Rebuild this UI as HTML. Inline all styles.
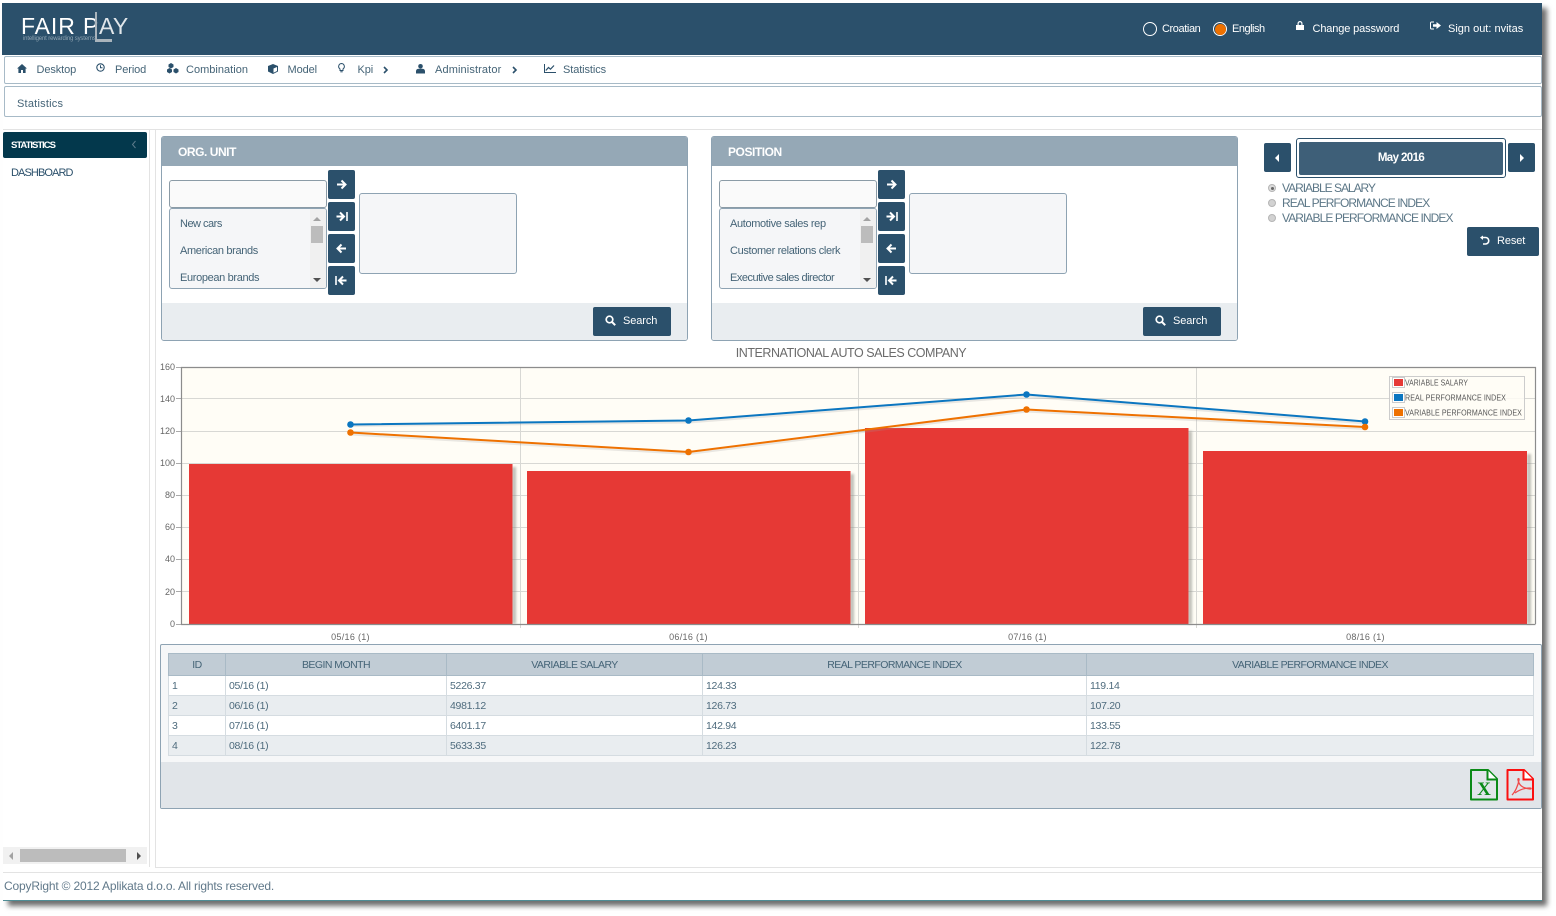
<!DOCTYPE html>
<html><head><meta charset="utf-8"><title>Fair Play</title>
<style>
*{box-sizing:border-box}
html,body{margin:0;padding:0;background:#fff;width:1556px;height:916px;overflow:hidden}
body{font-family:"Liberation Sans",sans-serif;color:#456477;position:relative}
.a{position:absolute;white-space:nowrap}
.t{position:absolute;white-space:nowrap;font-size:11px;letter-spacing:-.1px;line-height:14px;margin-top:1px}
.btn{position:absolute;background:#2b506b;border-radius:2px;color:#fff}
.panel{position:absolute;top:136px;width:527px;height:205px;border:1px solid #8ea3b3;border-radius:3px;background:#fff;overflow:hidden}
.ph{position:absolute;left:0;top:0;right:0;height:29px;background:#95a8b6;color:#fff;font-weight:bold;font-size:12px;letter-spacing:-.45px;line-height:30px;padding-left:16px}
.pf{position:absolute;left:0;right:0;bottom:0;height:37px;background:#e9edf0}
.inp{position:absolute;left:7px;top:43px;width:158px;height:28px;background:#fafafa;border:1px solid #8b9ba6;border-radius:3px}
.lst{position:absolute;left:7px;top:71px;width:158px;height:81px;background:#f5f6f8;border:1px solid #8ea3b3;border-radius:3px;overflow:hidden}
.lst span{position:absolute;left:10px;font-size:11px;letter-spacing:-.35px;color:#456477;white-space:nowrap;line-height:14px}
.sb{position:absolute;right:0;top:0;bottom:0;width:16px;background:#f0f0f0}
.sel{position:absolute;left:197px;top:56px;width:158px;height:81px;background:#f5f6f8;border:1px solid #8ea3b3;border-radius:3px}
table{position:absolute;left:168px;top:653px;width:1365px;height:102px;border-collapse:collapse;table-layout:fixed;font-size:10.5px;letter-spacing:-.3px;color:#4e6b7d}
th{background:#c1ccd5;font-weight:normal;height:22px;padding:0;border:1px solid #a9bac6;color:#456477;font-size:10.5px;letter-spacing:-.55px}
td{height:20px;padding:0 0 0 3px;border:1px solid #d5dce1;white-space:nowrap}
.r{position:absolute;left:1282px;font-size:12px;line-height:15px;letter-spacing:-.92px;color:#5c7787;white-space:nowrap}
svg text{font-family:"Liberation Sans",sans-serif}
</style></head><body>

<!-- window shadow -->
<div class="a" style="left:3px;top:3px;width:1539px;height:898px;background:#fff;box-shadow:5px 5px 5px #6f6f6f"></div>
<div class="a" style="left:3px;top:900px;width:1539px;height:1px;background:#4f8d95"></div>

<!-- header -->
<div class="a" style="left:2px;top:3px;width:1540px;height:52px;background:#2b506b"></div>
<div class="a" style="left:21px;top:13px;color:#fff;font-size:23px;line-height:26px;letter-spacing:.9px">FAIR P</div>
<div class="a" style="left:99px;top:13px;color:#e0e6ea;font-size:23px;line-height:26px;letter-spacing:.2px">AY</div>
<div class="a" style="left:95px;top:12px;width:2px;height:29px;background:#a9b4bc"></div>
<div class="a" style="left:95px;top:39px;width:17px;height:2.5px;background:#a9b4bc"></div>
<div class="a" style="left:23px;top:35px;color:#8fa3b1;font-size:6px;line-height:8px;letter-spacing:-.15px">intelligent rewarding systems</div>

<div class="a" style="left:1143px;top:22px;width:14px;height:14px;border:1px solid #fff;border-radius:50%"></div>
<div class="t" style="left:1162px;top:21px;color:#fff;letter-spacing:-.4px">Croatian</div>
<div class="a" style="left:1213px;top:22px;width:14px;height:14px;border:1px solid #fff;border-radius:50%;background:#2b506b"></div>
<div class="a" style="left:1214.5px;top:23.5px;width:11px;height:11px;border-radius:50%;background:#ee7100"></div>
<div class="t" style="left:1232px;top:21px;color:#fff;letter-spacing:-.5px">English</div>
<svg class="a" style="left:1296px;top:21px" width="8" height="10" viewBox="0 0 8 10"><path d="M0 4h8v5H0zM1.5 4V2.5a2.5 2.5 0 0 1 5 0V4H5.3V2.6a1.3 1.3 0 0 0-2.6 0V4z" fill="#fff"/></svg>
<div class="t" style="left:1312.5px;top:21px;color:#fff;letter-spacing:-.13px">Change password</div>
<svg class="a" style="left:1430px;top:21px" width="11" height="10" viewBox="0 0 11 10"><path d="M4 1H1.5A1 1 0 0 0 .5 2v5a1 1 0 0 0 1 1H4" fill="none" stroke="#fff"/><path d="M3 3.2h3.5V1L11 4.5 6.5 8V5.8H3z" fill="#fff"/></svg>
<div class="t" style="left:1448px;top:21px;color:#fff;letter-spacing:0">Sign out: nvitas</div>

<!-- menu bar -->
<div class="a" style="left:4px;top:56px;width:1538px;height:28px;border:1px solid #a7bac7;border-radius:2px;background:#fff"></div>
<svg class="a" style="left:17px;top:64px" width="10" height="9" viewBox="0 0 10 9"><path d="M5 0 0 4.5h1.4V9h2.6V6h2v3h2.600V4.500H10z" fill="#2b506b"/></svg>
<div class="t" style="left:36.500px;top:62px">Desktop</div>
<svg class="a" style="left:96px;top:63px" width="9" height="9" viewBox="0 0 9 9"><circle cx="4.500" cy="4.500" r="3.700" fill="none" stroke="#2b506b" stroke-width="1.100"/><path d="M4.500 2.200v2.500H6.500" fill="none" stroke="#2b506b"/></svg>
<div class="t" style="left:115px;top:62px">Period</div>
<svg class="a" style="left:167px;top:63px" width="12" height="11" viewBox="0 0 12 11"><path d="M4 0 6.500 1.500V4L4 5.500 1.500 4V1.500zM2.500 5 5 6.500V9L2.500 10.500 0 9V6.500zM9 5l2.500 1.500V9L9 10.500 6.500 9V6.500z" fill="#2b506b"/></svg>
<div class="t" style="left:186px;top:62px;letter-spacing:.02px">Combination</div>
<svg class="a" style="left:268px;top:64px" width="10" height="10" viewBox="0 0 10 10"><path d="M5 0 10 2v5.500L5 10 0 7.500V2z" fill="#2b506b"/><path d="M5.500 4.500 9 3v4L5.500 8.800z" fill="#fff"/></svg>
<div class="t" style="left:287.500px;top:62px">Model</div>
<svg class="a" style="left:338px;top:63px" width="7" height="10" viewBox="0 0 7 10"><path d="M3.500.5a3 3 0 0 0-1.500 5.500V7.500h3V6A3 3 0 0 0 3.500.5z" fill="none" stroke="#2b506b"/><path d="M2.300 8.800h2.400" stroke="#2b506b"/></svg>
<div class="t" style="left:357.500px;top:62px">Kpi</div>
<svg class="a" style="left:383px;top:66px" width="6" height="8" viewBox="0 0 6 8"><path d="M1 1l3 3-3 3" fill="none" stroke="#2b506b" stroke-width="1.600"/></svg>
<svg class="a" style="left:416px;top:64px" width="9" height="10" viewBox="0 0 9 10"><circle cx="4.500" cy="2.300" r="2.300" fill="#2b506b"/><path d="M0 9.500V7a3 2.500 0 0 1 3-2.200h3A3 2.500 0 0 1 9 7v2.500z" fill="#2b506b"/></svg>
<div class="t" style="left:435px;top:62px;letter-spacing:.12px">Administrator</div>
<svg class="a" style="left:512px;top:66px" width="6" height="8" viewBox="0 0 6 8"><path d="M1 1l3 3-3 3" fill="none" stroke="#2b506b" stroke-width="1.600"/></svg>
<svg class="a" style="left:544px;top:64px" width="12" height="9" viewBox="0 0 12 9"><path d="M.5 0v8.500H12" fill="none" stroke="#2b506b"/><path d="M1.800 6.500 4.500 3.500 6.500 5.200 10 1.500" fill="none" stroke="#2b506b" stroke-width="1.200"/></svg>
<div class="t" style="left:563px;top:62px">Statistics</div>

<!-- breadcrumb -->
<div class="a" style="left:4px;top:86px;width:1538px;height:31px;border:1px solid #a7bac7;border-radius:2px;background:#fff"></div>
<div class="t" style="left:17px;top:96px;letter-spacing:.22px">Statistics</div>

<!-- layout separators -->
<div class="a" style="left:3px;top:129px;width:1539px;height:1px;background:#e3e3e3"></div>
<div class="a" style="left:149px;top:130px;width:1px;height:737px;background:#e3e3e3"></div>
<div class="a" style="left:155px;top:130px;width:1px;height:737px;background:#e3e3e3"></div>
<div class="a" style="left:155px;top:867px;width:1387px;height:1px;background:#e3e3e3"></div>
<div class="a" style="left:3px;top:872px;width:1539px;height:1px;background:#e3e3e3"></div>

<!-- sidebar -->
<div class="a" style="left:3px;top:132px;width:144px;height:26px;background:#03384c;border-radius:2px"></div>
<div class="a" style="left:11px;top:139px;color:#fff;font-size:9.500px;font-weight:bold;line-height:14px;letter-spacing:-1px">STATISTICS</div>
<svg class="a" style="left:131px;top:140px" width="6" height="9" viewBox="0 0 6 9"><path d="M4.500 1 1.500 4.500l3 3.500" fill="none" stroke="#5d7b8b"/></svg>
<div class="a" style="left:11px;top:166px;color:#2b506b;font-size:11px;line-height:14px;letter-spacing:-.9px">DASHBOARD</div>

<div class="a" style="left:3px;top:847px;width:144px;height:17px;background:#f1f1f1"></div>
<div class="a" style="left:20px;top:849px;width:106px;height:13px;background:#bcbcbc"></div>
<div class="a" style="left:9px;top:852px;width:0;height:0;border-top:4px solid transparent;border-bottom:4px solid transparent;border-right:4px solid #a3a3a3"></div>
<div class="a" style="left:137px;top:852px;width:0;height:0;border-top:4px solid transparent;border-bottom:4px solid transparent;border-left:4px solid #505050"></div>

<!-- ORG UNIT panel -->
<div class="panel" style="left:161px">
 <div class="ph">ORG. UNIT</div>
 <div class="inp"></div>
 <div class="lst"><span style="top:8px;letter-spacing:-.5px">New cars</span><span style="top:35px">American brands</span><span style="top:62px">European brands</span>
  <div class="sb"><div style="position:absolute;left:1px;top:17px;width:12px;height:17px;background:#bcbcbc"></div><div style="position:absolute;left:3px;top:8px;border-left:4px solid transparent;border-right:4px solid transparent;border-bottom:4px solid #a3a3a3"></div><div style="position:absolute;left:3px;top:69px;border-left:4px solid transparent;border-right:4px solid transparent;border-top:4px solid #505050"></div></div>
 </div>
 <div class="sel"></div>
 <div class="pf"></div>
</div>
<!-- POSITION panel -->
<div class="panel" style="left:711px">
 <div class="ph">POSITION</div>
 <div class="inp"></div>
 <div class="lst"><span style="top:8px">Automotive sales rep</span><span style="top:35px">Customer relations clerk</span><span style="top:62px;letter-spacing:-.5px">Executive sales director</span>
  <div class="sb"><div style="position:absolute;left:1px;top:17px;width:12px;height:17px;background:#bcbcbc"></div><div style="position:absolute;left:3px;top:8px;border-left:4px solid transparent;border-right:4px solid transparent;border-bottom:4px solid #a3a3a3"></div><div style="position:absolute;left:3px;top:69px;border-left:4px solid transparent;border-right:4px solid transparent;border-top:4px solid #505050"></div></div>
 </div>
 <div class="sel"></div>
 <div class="pf"></div>
</div>

<!-- transfer buttons, left -->
<div class="btn" style="left:328px;top:170px;width:27px;height:29px"><svg width="27" height="29" viewBox="0 0 27 29"><path d="M9 14.500h8M13.500 10.500l4 4-4 4" fill="none" stroke="#fff" stroke-width="2"/></svg></div>
<div class="btn" style="left:328px;top:202px;width:27px;height:29px"><svg width="27" height="29" viewBox="0 0 27 29"><path d="M8.500 14.500h7M12 10.500l4 4-4 4" fill="none" stroke="#fff" stroke-width="2"/><path d="M19 10v9" stroke="#fff" stroke-width="1.600"/></svg></div>
<div class="btn" style="left:328px;top:234px;width:27px;height:29px"><svg width="27" height="29" viewBox="0 0 27 29"><path d="M18 14.500H10M13.500 10.500l-4 4 4 4" fill="none" stroke="#fff" stroke-width="2"/></svg></div>
<div class="btn" style="left:328px;top:266px;width:27px;height:29px"><svg width="27" height="29" viewBox="0 0 27 29"><path d="M18.500 14.500h-7M15 10.500l-4 4 4 4" fill="none" stroke="#fff" stroke-width="2"/><path d="M8 10v9" stroke="#fff" stroke-width="1.600"/></svg></div>
<!-- transfer buttons, right -->
<div class="btn" style="left:878px;top:170px;width:27px;height:29px"><svg width="27" height="29" viewBox="0 0 27 29"><path d="M9 14.500h8M13.500 10.500l4 4-4 4" fill="none" stroke="#fff" stroke-width="2"/></svg></div>
<div class="btn" style="left:878px;top:202px;width:27px;height:29px"><svg width="27" height="29" viewBox="0 0 27 29"><path d="M8.500 14.500h7M12 10.500l4 4-4 4" fill="none" stroke="#fff" stroke-width="2"/><path d="M19 10v9" stroke="#fff" stroke-width="1.600"/></svg></div>
<div class="btn" style="left:878px;top:234px;width:27px;height:29px"><svg width="27" height="29" viewBox="0 0 27 29"><path d="M18 14.500H10M13.500 10.500l-4 4 4 4" fill="none" stroke="#fff" stroke-width="2"/></svg></div>
<div class="btn" style="left:878px;top:266px;width:27px;height:29px"><svg width="27" height="29" viewBox="0 0 27 29"><path d="M18.500 14.500h-7M15 10.500l-4 4 4 4" fill="none" stroke="#fff" stroke-width="2"/><path d="M8 10v9" stroke="#fff" stroke-width="1.600"/></svg></div>

<!-- search buttons -->
<div class="btn" style="left:593px;top:307px;width:78px;height:29px"><svg style="position:absolute;left:12px;top:8px" width="11" height="11" viewBox="0 0 11 11"><circle cx="4.500" cy="4.500" r="3.300" fill="none" stroke="#fff" stroke-width="1.700"/><path d="M7 7l3.200 3.200" stroke="#fff" stroke-width="2"/></svg><span class="t" style="left:30px;top:6px;color:#fff">Search</span></div>
<div class="btn" style="left:1143px;top:307px;width:78px;height:29px"><svg style="position:absolute;left:12px;top:8px" width="11" height="11" viewBox="0 0 11 11"><circle cx="4.500" cy="4.500" r="3.300" fill="none" stroke="#fff" stroke-width="1.700"/><path d="M7 7l3.200 3.200" stroke="#fff" stroke-width="2"/></svg><span class="t" style="left:30px;top:6px;color:#fff">Search</span></div>

<!-- month picker -->
<div class="btn" style="left:1264px;top:143px;width:27px;height:29px"><div style="position:absolute;left:11px;top:11px;border-top:4px solid transparent;border-bottom:4px solid transparent;border-right:4px solid #fff"></div></div>
<div class="a" style="left:1296px;top:138px;width:210px;height:40px;border:1px solid #2b506b;border-radius:3px;background:#fff"></div>
<div class="a" style="left:1299px;top:142px;width:204px;height:33px;background:#3e5f78;border-radius:2px;color:#fff;font-size:11.500px;font-weight:bold;text-align:center;line-height:32px;letter-spacing:-.6px">May 2016</div>
<div class="btn" style="left:1508px;top:143px;width:27px;height:29px"><div style="position:absolute;left:12px;top:11px;border-top:4px solid transparent;border-bottom:4px solid transparent;border-left:4px solid #fff"></div></div>

<!-- radios -->
<div class="a" style="left:1268px;top:184px;width:8px;height:8px;border-radius:50%;background:#dcdcdc;border:1px solid #b5b5b5"></div>
<div class="a" style="left:1270.500px;top:186.500px;width:3px;height:3px;border-radius:50%;background:#666"></div>
<div class="a" style="left:1268px;top:199px;width:8px;height:8px;border-radius:50%;background:#d2d2d2;border:1px solid #b5b5b5"></div>
<div class="a" style="left:1268px;top:214px;width:8px;height:8px;border-radius:50%;background:#d2d2d2;border:1px solid #b5b5b5"></div>
<div class="r" style="top:181px;letter-spacing:-1.02px">VARIABLE SALARY</div>
<div class="r" style="top:196px;">REAL PERFORMANCE INDEX</div>
<div class="r" style="top:211px">VARIABLE PERFORMANCE INDEX</div>

<div class="btn" style="left:1467px;top:227px;width:72px;height:29px"><svg style="position:absolute;left:12px;top:8px" width="12" height="11" viewBox="0 0 12 11"><path d="M2.500 2.500h4a3.200 3.200 0 0 1 0 6.500H4" fill="none" stroke="#fff" stroke-width="1.600"/><path d="M1 2.500 4 .500v4.500z" fill="#fff"/></svg><span class="t" style="left:30px;top:6px;color:#fff">Reset</span></div>

<!-- chart -->
<svg class="a" style="left:0;top:0" width="1556" height="916" viewBox="0 0 1556 916">
<text x="851" y="357" text-anchor="middle" font-size="12.500" fill="#6b6b6b" letter-spacing="-.47">INTERNATIONAL AUTO SALES COMPANY</text>
<rect x="181.500" y="367" width="1353" height="257" fill="#fffdf6"/>
<g stroke="#d8d8d4" stroke-width="1">
<path d="M182 398.500H1535M182 431.500H1535M182 463.500H1535M182 495.500H1535M182 527.500H1535M182 559.500H1535M182 591.500H1535"/>
<path d="M520.500 367V628M858.500 367V628M1196.500 367V628"/>
</g>
<path d="M176 367.500H182M176 398.500H182M176 431.500H182M176 463.500H182M176 495.500H182M176 527.500H182M176 559.500H182M176 591.500H182M176 624.500H182" stroke="#aaa"/>
<g fill="#8a8a82" opacity=".55" style="filter:blur(1.200px)">
<rect x="512" y="467" width="4" height="157"/><rect x="850" y="474" width="4" height="150"/><rect x="1188" y="431" width="4" height="193"/><rect x="1527" y="454" width="4" height="170"/>
</g>
<g fill="#e63935">
<rect x="189" y="464" width="323.500" height="160"/>
<rect x="527" y="471" width="323.500" height="153"/>
<rect x="865" y="428" width="323.500" height="196"/>
<rect x="1203" y="451" width="324" height="173"/>
</g>
<path d="M181.500 624V367.500H1535.500V624" fill="none" stroke="#8c8c8c" stroke-width="1.200"/>
<path d="M181 624.500H1535.500" stroke="#8c8c8c" stroke-width="1.200"/>
<path d="M350.500 426 688.500 422.500 1026.500 396.500 1365 423.500" fill="none" stroke="#999" stroke-width="2" opacity=".22"/>
<path d="M350.500 434.500 688.500 454 1026.500 411.500 1365 429" fill="none" stroke="#999" stroke-width="2" opacity=".22"/>
<path d="M350.500 424.500 688.500 420.500 1026.500 394.500 1365 421.500" fill="none" stroke="#0b76c0" stroke-width="2"/>
<path d="M350.500 432.500 688.500 452 1026.500 409.500 1365 427" fill="none" stroke="#ee7100" stroke-width="2"/>
<g fill="#0b76c0"><circle cx="350.500" cy="424.500" r="3.300"/><circle cx="688.500" cy="420.500" r="3.300"/><circle cx="1026.500" cy="394.500" r="3.300"/><circle cx="1365" cy="421.500" r="3.300"/></g>
<g fill="#ee7100"><circle cx="350.500" cy="432.500" r="3.300"/><circle cx="688.500" cy="452" r="3.300"/><circle cx="1026.500" cy="409.500" r="3.300"/><circle cx="1365" cy="427" r="3.300"/></g>
<g font-size="9" fill="#666" text-anchor="end">
<text x="175" y="370">160</text><text x="175" y="402">140</text><text x="175" y="434">120</text><text x="175" y="466">100</text><text x="175" y="498">80</text><text x="175" y="530">60</text><text x="175" y="562">40</text><text x="175" y="595">20</text><text x="175" y="627">0</text>
</g>
<g font-size="9" fill="#666" text-anchor="middle" letter-spacing=".3">
<text x="350.500" y="640">05/16 (1)</text><text x="688.500" y="640">06/16 (1)</text><text x="1027.500" y="640">07/16 (1)</text><text x="1365.500" y="640">08/16 (1)</text>
</g>
<!-- legend -->
<rect x="1389.500" y="376.500" width="135" height="43" fill="#fffdf6" fill-opacity=".85" stroke="#ccc"/>
<rect x="1392.500" y="377.500" width="12" height="10" fill="#fff" stroke="#ccc"/><rect x="1394" y="379" width="9" height="7" fill="#e63935"/>
<rect x="1392.500" y="392.500" width="12" height="10" fill="#fff" stroke="#ccc"/><rect x="1394" y="394" width="9" height="7" fill="#0b76c0"/>
<rect x="1392.500" y="407.500" width="12" height="10" fill="#fff" stroke="#ccc"/><rect x="1394" y="409" width="9" height="7" fill="#ee7100"/>
<g font-size="8" fill="#555" letter-spacing=".1">
<text x="1405" y="385.500" textLength="63" lengthAdjust="spacingAndGlyphs">VARIABLE SALARY</text>
<text x="1405" y="400.500" textLength="101" lengthAdjust="spacingAndGlyphs">REAL PERFORMANCE INDEX</text>
<text x="1405" y="415.500" textLength="117" lengthAdjust="spacingAndGlyphs">VARIABLE PERFORMANCE INDEX</text>
</g>
</svg>

<!-- table panel -->
<div class="a" style="left:160px;top:644px;width:1382px;height:165px;border:1px solid #8ea3b3;border-radius:2px;background:#f6f7f8"></div>
<div class="a" style="left:161px;top:762px;width:1380px;height:46px;background:#e1e5e9"></div>
<table>
<colgroup><col style="width:57px"><col style="width:221px"><col style="width:256px"><col style="width:384px"><col style="width:447px"></colgroup>
<thead><tr><th>ID</th><th>BEGIN MONTH</th><th>VARIABLE SALARY</th><th>REAL PERFORMANCE INDEX</th><th>VARIABLE PERFORMANCE INDEX</th></tr></thead>
<tbody>
<tr><td style="background:#fff">1</td><td style="background:#fff">05/16 (1)</td><td style="background:#fff">5226.37</td><td style="background:#fff">124.33</td><td style="background:#fff">119.14</td></tr>
<tr><td style="background:#e9edf0">2</td><td style="background:#e9edf0">06/16 (1)</td><td style="background:#e9edf0">4981.12</td><td style="background:#e9edf0">126.73</td><td style="background:#e9edf0">107.20</td></tr>
<tr><td style="background:#fff">3</td><td style="background:#fff">07/16 (1)</td><td style="background:#fff">6401.17</td><td style="background:#fff">142.94</td><td style="background:#fff">133.55</td></tr>
<tr><td style="background:#e9edf0">4</td><td style="background:#e9edf0">08/16 (1)</td><td style="background:#e9edf0">5633.35</td><td style="background:#e9edf0">126.23</td><td style="background:#e9edf0">122.78</td></tr>
</tbody></table>

<!-- export icons -->
<svg class="a" style="left:1469px;top:768px" width="30" height="34" viewBox="0 0 30 34">
<path d="M2 2h17l9 9v20.500H2z" fill="none" stroke="#0b8a17" stroke-width="2" stroke-linejoin="round"/>
<path d="M18.500 2v9.500H28" fill="#fff" stroke="#0b8a17" stroke-width="2"/>
<text x="15" y="27" text-anchor="middle" font-size="19" font-weight="bold" fill="#0b8a17" style="font-family:'Liberation Serif',serif">X</text>
</svg>
<svg class="a" style="left:1506px;top:768px" width="29" height="34" viewBox="0 0 29 34">
<path d="M1.500 2h16.500l9 9v20.500H1.500z" fill="none" stroke="#fb1010" stroke-width="2" stroke-linejoin="round"/>
<path d="M17.500 2v9.500H27" fill="#fff" stroke="#fb1010" stroke-width="2"/>
<path d="M6 27c3-3 6-9 7-15 .5-2-1.500-2-1 0 1 5 4 8 12 9 1.500 0 1.500-1 0-1-6 0-11 2-15 5" fill="none" stroke="#f04a4a" stroke-width="1.300"/>
</svg>

<!-- footer -->
<div class="a" style="left:4px;top:879px;font-size:12px;line-height:15px;color:#61798a;letter-spacing:-.17px">CopyRight © 2012 Aplikata d.o.o. All rights reserved.</div>
</body></html>
